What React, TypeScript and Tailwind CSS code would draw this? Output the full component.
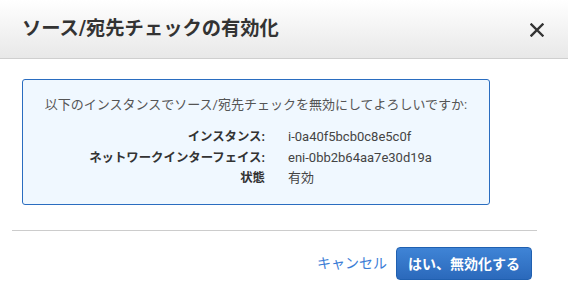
import React from "react";

export default function App() {
  const font = { fontFamily: 'Roboto, "Noto Sans CJK JP", sans-serif' };
  return (
    <div className="w-[568px] h-[295px] bg-white overflow-hidden" style={font}>
      <div className="h-[59px] flex items-center justify-between pl-[22px] pr-[24px] border-b border-[#cfcfcf] bg-gradient-to-b from-[#ffffff] to-[#e8e8e8]">
        <div className="text-[19.3px] font-bold text-[#333333] leading-none">ソース/宛先チェックの有効化</div>
        <svg width="14" height="14" viewBox="0 0 14 14" className="mt-[1px]">
          <path d="M1.5 1.5 L12.5 12.5 M12.5 1.5 L1.5 12.5" stroke="#333" strokeWidth="2.4" strokeLinecap="square" />
        </svg>
      </div>
      <div className="pl-[22px] pt-[20px]">
        <div className="w-[468px] h-[126px] border border-[#2a6dc0] rounded-[3px] bg-[#f0f8ff] pt-[15px]">
          <div className="text-center text-[13px] leading-[20px] text-[#555555]">以下のインスタンスでソース/宛先チェックを無効にしてよろしいですか:</div>
          <div className="mt-[12px] grid grid-cols-[242px_1fr] gap-x-[23px] text-[13px] leading-[20.5px]">
            <div className="text-right font-bold text-[#333333] text-[12.4px]">インスタンス:</div>
            <div className="text-[#444444]">i-0a40f5bcb0c8e5c0f</div>
            <div className="text-right font-bold text-[#333333] text-[12.4px]">ネットワークインターフェイス:</div>
            <div className="text-[#444444]">eni-0bb2b64aa7e30d19a</div>
            <div className="text-right font-bold text-[#333333] text-[12.4px]">状態</div>
            <div className="text-[#444444]">有効</div>
          </div>
        </div>
      </div>
      <div className="ml-[12px] mt-[25px] w-[525px] border-t border-[#cccccc]"></div>
      <div className="flex justify-end items-center pr-[36px] mt-[16px] gap-[9px]">
        <span className="text-[14px] text-[#3b7dd6]">キャンセル</span>
        <button className="h-[33px] px-[11px] rounded-[4px] border border-[#2060b0] bg-gradient-to-b from-[#3f84d6] to-[#2b69bb] text-white font-bold text-[14px] leading-none">はい、無効化する</button>
      </div>
    </div>
  );
}
